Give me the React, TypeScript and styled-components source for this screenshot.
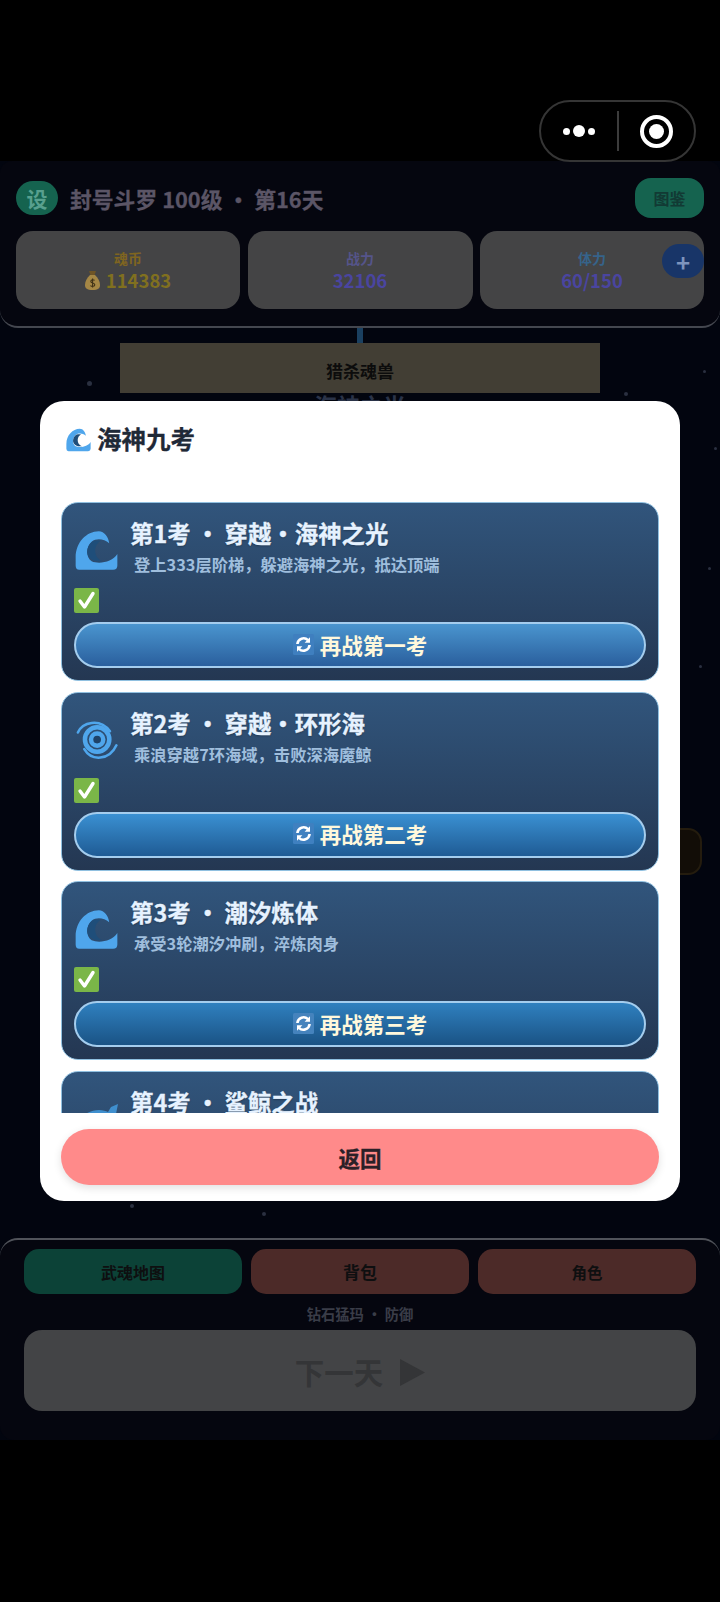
import React from 'react';
import styled, { createGlobalStyle } from 'styled-components';

const GlobalStyle = createGlobalStyle`
  html, body {
    margin: 0;
    padding: 0;
    background: #000;
    font-family: "Noto Sans CJK SC", "Noto Sans", sans-serif;
  }
  * { box-sizing: border-box; }
`;

const Page = styled.div`
  position: relative;
  width: 720px;
  height: 1602px;
  overflow: hidden;
  background: #000;
  padding-top: 161px;
`;

const Capsule = styled.div`
  position: absolute;
  left: 539px;
  top: 100px;
  width: 157px;
  height: 62px;
  border: 2px solid #353535;
  border-radius: 31px;
  display: flex;
  align-items: center;
  z-index: 5;
`;

const CapsuleSide = styled.div`
  flex: 1;
  display: flex;
  align-items: center;
  justify-content: center;
  gap: 3px;
`;

const Dot = styled.span<{ $big?: boolean }>`
  width: ${({ $big }) => ($big ? 12 : 7)}px;
  height: ${({ $big }) => ($big ? 12 : 7)}px;
  border-radius: 50%;
  background: #fff;
`;

const CapsuleLine = styled.div`
  width: 2px;
  height: 40px;
  background: #3c3c3c;
`;

const Target = styled.div`
  width: 33px;
  height: 33px;
  border: 4px solid #fff;
  border-radius: 50%;
  display: flex;
  align-items: center;
  justify-content: center;
  &::after {
    content: '';
    width: 15px;
    height: 15px;
    border-radius: 50%;
    background: #fff;
  }
`;

const Scene = styled.div`
  height: 1279px;
  display: flex;
  flex-direction: column;
  background: #02050f;
`;

const TopPanel = styled.div`
  height: 167px;
  padding: 17px 16px 0;
  background: #05060f;
  border-radius: 12px 12px 18px 18px;
  border-bottom: 2px solid #44474f;
`;

const TopRow = styled.div`
  display: flex;
  align-items: center;
  height: 40px;
`;

const Badge = styled.div`
  width: 42px;
  height: 34px;
  border-radius: 17px;
  background: #15634f;
  color: #58a08e;
  font-size: 21px;
  font-weight: 700;
  display: flex;
  align-items: center;
  justify-content: center;
`;

const PlayerName = styled.div`
  flex: 1;
  margin-left: 12px;
  color: #5b5566;
  font-size: 21.8px;
  font-weight: 700;
  white-space: pre;
  -webkit-text-stroke: 0.3px #5b5566;
`;

const AtlasButton = styled.div`
  width: 69px;
  height: 40px;
  border-radius: 16px;
  background: #15634f;
  color: #123a34;
  font-size: 16px;
  font-weight: 700;
  display: flex;
  align-items: center;
  justify-content: center;
`;

const Stats = styled.div`
  position: relative;
  display: grid;
  grid-template-columns: 224px 225px 224px;
  column-gap: 7.5px;
  margin-top: 13px;
`;

const Stat = styled.div`
  height: 78px;
  border-radius: 17px;
  background: #444445;
  display: flex;
  flex-direction: column;
  align-items: center;
  padding-top: 15px;
`;

const StatLabel = styled.div<{ $color: string }>`
  color: ${({ $color }) => $color};
  font-size: 14px;
  font-weight: 700;
  line-height: 24px;
`;

const StatValue = styled.div<{ $color: string }>`
  display: flex;
  align-items: center;
  gap: 6px;
  margin-top: -2px;
  color: ${({ $color }) => $color};
  font-size: 18.5px;
  font-weight: 700;
  line-height: 24px;
`;

const PlusButton = styled.div`
  position: absolute;
  right: 0;
  top: 13px;
  width: 42px;
  height: 34px;
  border-radius: 17px;
  background: #183568;
  color: #7d94bd;
  font-size: 24px;
  font-weight: 700;
  display: flex;
  align-items: center;
  justify-content: center;
`;

const MapArea = styled.div`
  position: relative;
  flex: 1;
  display: flex;
  flex-direction: column;
  align-items: center;
`;

const Connector = styled.div`
  width: 6px;
  height: 15px;
  background: #1a4060;
`;

const HuntBanner = styled.div`
  width: 480px;
  height: 50px;
  background: #423e34;
  color: #0c0c0c;
  font-size: 17px;
  font-weight: 700;
  display: flex;
  align-items: center;
  justify-content: center;
  padding-top: 5px;
`;

const MapLabel = styled.div`
  color: #2a3348;
  font-size: 23px;
  font-weight: 700;
  line-height: 24px;
  margin-top: 0;
`;

const Star = styled.span<{ $x: number; $y: number; $size: number }>`
  position: absolute;
  left: ${({ $x }) => $x}px;
  top: ${({ $y }) => $y - 328}px;
  width: ${({ $size }) => $size}px;
  height: ${({ $size }) => $size}px;
  border-radius: 50%;
  background: #2a3040;
`;

const MapNode = styled.div`
  position: absolute;
  left: 640px;
  top: 500px;
  width: 62px;
  height: 47px;
  border-radius: 14px;
  background: #120d07;
  border: 2px solid #241c0e;
`;

const BottomPanel = styled.div`
  height: 202px;
  padding: 9px 24px 0;
  background: #05060f;
  border-top: 2px solid #50535a;
  border-radius: 18px 18px 14px 14px;
`;

const NavRow = styled.div`
  display: grid;
  grid-template-columns: repeat(3, 218px);
  gap: 9px;
`;

const NavButton = styled.div<{ $bg: string; $size: number }>`
  height: 45px;
  border-radius: 15px;
  background: ${({ $bg }) => $bg};
  color: #0e0f10;
  font-size: ${({ $size }) => $size}px;
  font-weight: 700;
  display: flex;
  align-items: center;
  justify-content: center;
`;

const SkillLine = styled.div`
  color: #3a3d48;
  font-size: 14.3px;
  font-weight: 700;
  line-height: 20px;
  text-align: center;
  margin-top: 10px;
  white-space: pre;
`;

const NextDay = styled.div`
  height: 81px;
  margin-top: 6px;
  border-radius: 18px;
  background: #434446;
  color: #343537;
  font-size: 29.5px;
  font-weight: 700;
  display: flex;
  align-items: center;
  justify-content: center;
  gap: 17px;
`;

const PlayArrow = styled.svg`
  width: 25px;
  height: 27px;
  margin-top: 3px;
`;

const Overlay = styled.div`
  position: absolute;
  inset: 0;
  display: flex;
  align-items: center;
  justify-content: center;
`;

const Modal = styled.div`
  width: 640px;
  height: 800px;
  background: #fff;
  border-radius: 24px;
  padding: 0 21px;
  display: flex;
  flex-direction: column;
`;

const ModalHead = styled.div`
  height: 101px;
  padding: 23px 0 0 5px;
  display: flex;
  align-items: flex-start;
  gap: 6px;
  color: #1f2937;
  font-size: 24.5px;
  font-weight: 700;
  line-height: 30px;
  -webkit-text-stroke: 0.3px #1f2937;
`;

const HeadIcon = styled.svg`
  width: 25px;
  height: 24px;
  margin-top: 4px;
`;

const List = styled.div`
  flex: 1;
  overflow: hidden;
  display: flex;
  flex-direction: column;
  gap: 10.5px;
`;

const Card = styled.div`
  flex: none;
  height: 179px;
  padding: 13px 12px 0;
  border: 1px solid #90c0e0;
  border-radius: 17px;
  background: linear-gradient(180deg, #31557c 0%, #243752 100%);
`;

const CardHead = styled.div`
  display: flex;
  gap: 12px;
  height: 72px;
`;

const CardIcon = styled.svg`
  flex: none;
  width: 43px;
  height: 43px;
  margin: 13px 0 0 1px;
`;

const CardTitle = styled.div`
  color: #e6f2ff;
  font-size: 23.4px;
  font-weight: 700;
  line-height: 34px;
  white-space: pre;
  text-shadow: 0 1px 2px rgba(0, 0, 0, 0.3);
  -webkit-text-stroke: 0.3px #e6f2ff;
`;

const CardDesc = styled.div`
  color: #9fbedd;
  font-size: 16.3px;
  font-weight: 700;
  line-height: 24px;
  margin: 2px 0 0 4px;
`;

const CheckIcon = styled.svg`
  display: block;
  width: 25px;
  height: 25px;
`;

const RetryButton = styled.div<{ $top: string; $bottom: string }>`
  height: 46px;
  margin-top: 9px;
  padding-bottom: 2px;
  border: 2px solid #a4cdee;
  border-radius: 23px;
  background: linear-gradient(180deg, ${({ $top }) => $top} 0%, ${({ $bottom }) => $bottom} 100%);
  color: #fff8dc;
  font-size: 21.5px;
  font-weight: 700;
  display: flex;
  align-items: center;
  justify-content: center;
  gap: 6px;
`;

const RefreshIcon = styled.svg`
  width: 21px;
  height: 21px;
`;

const Footer = styled.div`
  height: 88px;
  padding-top: 16px;
`;

const BackButton = styled.div`
  height: 56px;
  border-radius: 28px;
  background: #ff8a8a;
  box-shadow: 0 3px 8px rgba(0, 0, 0, 0.12);
  color: #2b2027;
  font-size: 21.5px;
  font-weight: 700;
  -webkit-text-stroke: 0.3px #2b2027;
  display: flex;
  align-items: center;
  justify-content: center;
`;

const WavePaths = () => (
  <>
    <path
      fill="#4fa6ec"
      d="M58 178Q47 178 47 165L47 140C47 95 80 60 118 60C135 60 148 78 150 97C135 84 112 80 96 92C78 108 78 140 96 152C118 162 160 155 175 130L175 165Q175 178 162 178Z"
    />
    <path fill="#1f4e7a" d="M108 88C90 90 78 115 84 132C90 148 108 154 130 152C112 146 106 130 107 115C108 104 114 96 124 88Z" />
  </>
);

const WaveIcon = () => (
  <CardIcon viewBox="45 58 132 122">
    <WavePaths />
  </CardIcon>
);

const CycloneIcon = () => (
  <CardIcon viewBox="43 51 134 124">
    <circle cx="112" cy="110" r="13" fill="#1f4268" />
    <circle cx="112" cy="110" r="19" fill="none" stroke="#4fa6ec" strokeWidth="14" />
    <circle cx="112" cy="110" r="38" fill="none" stroke="#4fa6ec" strokeWidth="14" />
    <path d="M52 88C66 56 120 42 152 84" fill="none" stroke="#4fa6ec" strokeWidth="8" strokeLinecap="round" />
    <path d="M172 128C150 176 94 178 72 140" fill="none" stroke="#4fa6ec" strokeWidth="8" strokeLinecap="round" />
  </CardIcon>
);

const SharkIcon = () => (
  <CardIcon viewBox="0 0 43 43">
    <path fill="#3f8fce" d="M2 24C8 16 16 12 24 12C28 12 31 13 33 14L36 9L43 6L41 16C42 20 42 22 42 24C32 34 12 34 2 24Z" />
  </CardIcon>
);

const CheckMark = () => (
  <CheckIcon viewBox="0 0 25 25">
    <rect width="25" height="25" rx="2" fill="#7ab648" />
    <path d="M6 13L10.5 19L19 5.5" fill="none" stroke="#fff" strokeWidth="3.4" strokeLinecap="round" strokeLinejoin="round" />
  </CheckIcon>
);

const Refresh = ({ bg }: { bg: string }) => (
  <RefreshIcon viewBox="0 0 21 21">
    <rect width="21" height="21" rx="1.5" fill={bg} />
    <path d="M4.4 10A6.2 6.2 0 0 1 15 6.2" fill="none" stroke="#fff" strokeWidth="2.6" />
    <path d="M16.6 11A6.2 6.2 0 0 1 6 14.8" fill="none" stroke="#fff" strokeWidth="2.6" />
    <path d="M17 3.2V8.8H11.6Z" fill="#fff" />
    <path d="M4 17.8V12.2H9.4Z" fill="#fff" />
  </RefreshIcon>
);

const MoneyBag = () => (
  <svg width="15" height="19" viewBox="0 0 15 19">
    <path d="M4 0H11L9.6 4H5.4Z" fill="#6f5526" />
    <path d="M5 4H10C13 7 15 10 15 14C15 17.5 13 19 7.5 19C2 19 0 17.5 0 14C0 10 2 7 5 4Z" fill="#a58745" />
    <path d="M9.6 9.4C8.4 8.4 5.8 8.6 5.8 10.4C5.8 12.4 9.8 11.6 9.8 13.8C9.8 15.6 7 15.8 5.4 14.6M7.6 7.6V16.6" fill="none" stroke="#3f3117" strokeWidth="1.1" />
  </svg>
);

const stars: [number, number, number][] = [
  [87, 381, 5], [624, 392, 4], [703, 370, 3], [714, 447, 3],
  [708, 567, 3], [699, 665, 3], [130, 1204, 4], [262, 1212, 4],
];

type Trial = {
  title: string;
  desc?: string;
  icon: React.ReactNode;
  retry?: string;
  top?: string;
  bottom?: string;
  refreshBg?: string;
};

const trials: Trial[] = [
  {
    title: '第1考 · 穿越·海神之光',
    desc: '登上333层阶梯，躲避海神之光，抵达顶端',
    icon: <WaveIcon />,
    retry: '再战第一考',
    top: '#4a95cf',
    bottom: '#2a5f9d',
    refreshBg: '#3f7fbf',
  },
  {
    title: '第2考 · 穿越·环形海',
    desc: '乘浪穿越7环海域，击败深海魔鲸',
    icon: <CycloneIcon />,
    retry: '再战第二考',
    top: '#3a90d2',
    bottom: '#1f5b94',
    refreshBg: '#3f80c0',
  },
  {
    title: '第3考 · 潮汐炼体',
    desc: '承受3轮潮汐冲刷，淬炼肉身',
    icon: <WaveIcon />,
    retry: '再战第三考',
    top: '#2f80bf',
    bottom: '#1a5385',
    refreshBg: '#4583bd',
  },
  { title: '第4考 · 鲨鲸之战', icon: <SharkIcon /> },
];

const App = () => (
  <Page>
    <GlobalStyle />
    <Capsule>
      <CapsuleSide>
        <Dot />
        <Dot $big />
        <Dot />
      </CapsuleSide>
      <CapsuleLine />
      <CapsuleSide>
        <Target />
      </CapsuleSide>
    </Capsule>

    <Scene>
      <TopPanel>
        <TopRow>
          <Badge>设</Badge>
          <PlayerName>封号斗罗 100级 · 第16天</PlayerName>
          <AtlasButton>图鉴</AtlasButton>
        </TopRow>
        <Stats>
          <Stat>
            <StatLabel $color="#7f6520">魂币</StatLabel>
            <StatValue $color="#80701f">
              <MoneyBag />
              114383
            </StatValue>
          </Stat>
          <Stat>
            <StatLabel $color="#55548a">战力</StatLabel>
            <StatValue $color="#4a45a0">32106</StatValue>
          </Stat>
          <Stat>
            <StatLabel $color="#36638a">体力</StatLabel>
            <StatValue $color="#4a45a0">60/150</StatValue>
          </Stat>
          <PlusButton>+</PlusButton>
        </Stats>
      </TopPanel>

      <MapArea>
        <Connector />
        <HuntBanner>猎杀魂兽</HuntBanner>
        <MapLabel>海神之光</MapLabel>
        {stars.map(([x, y, size]) => (
          <Star key={`${x}-${y}`} $x={x} $y={y} $size={size} />
        ))}
        <MapNode />
      </MapArea>

      <BottomPanel>
        <NavRow>
          <NavButton $bg="#0c4237" $size={16}>武魂地图</NavButton>
          <NavButton $bg="#4c2a28" $size={17}>背包</NavButton>
          <NavButton $bg="#4c2a28" $size={15.5}>角色</NavButton>
        </NavRow>
        <SkillLine>钻石猛玛 · 防御</SkillLine>
        <NextDay>
          下一天
          <PlayArrow viewBox="0 0 25 27">
            <path d="M0 0L25 13.5L0 27Z" fill="#343537" />
          </PlayArrow>
        </NextDay>
      </BottomPanel>
    </Scene>

    <Overlay>
      <Modal>
        <ModalHead>
          <HeadIcon viewBox="45 58 132 122">
            <WavePaths />
          </HeadIcon>
          海神九考
        </ModalHead>
        <List>
          {trials.map(t => (
            <Card key={t.title}>
              <CardHead>
                {t.icon}
                <div>
                  <CardTitle>{t.title}</CardTitle>
                  <CardDesc>{t.desc}</CardDesc>
                </div>
              </CardHead>
              <CheckMark />
              {t.retry && (
                <RetryButton $top={t.top!} $bottom={t.bottom!}>
                  <Refresh bg={t.refreshBg!} />
                  {t.retry}
                </RetryButton>
              )}
            </Card>
          ))}
        </List>
        <Footer>
          <BackButton>返回</BackButton>
        </Footer>
      </Modal>
    </Overlay>
  </Page>
);

export default App;
